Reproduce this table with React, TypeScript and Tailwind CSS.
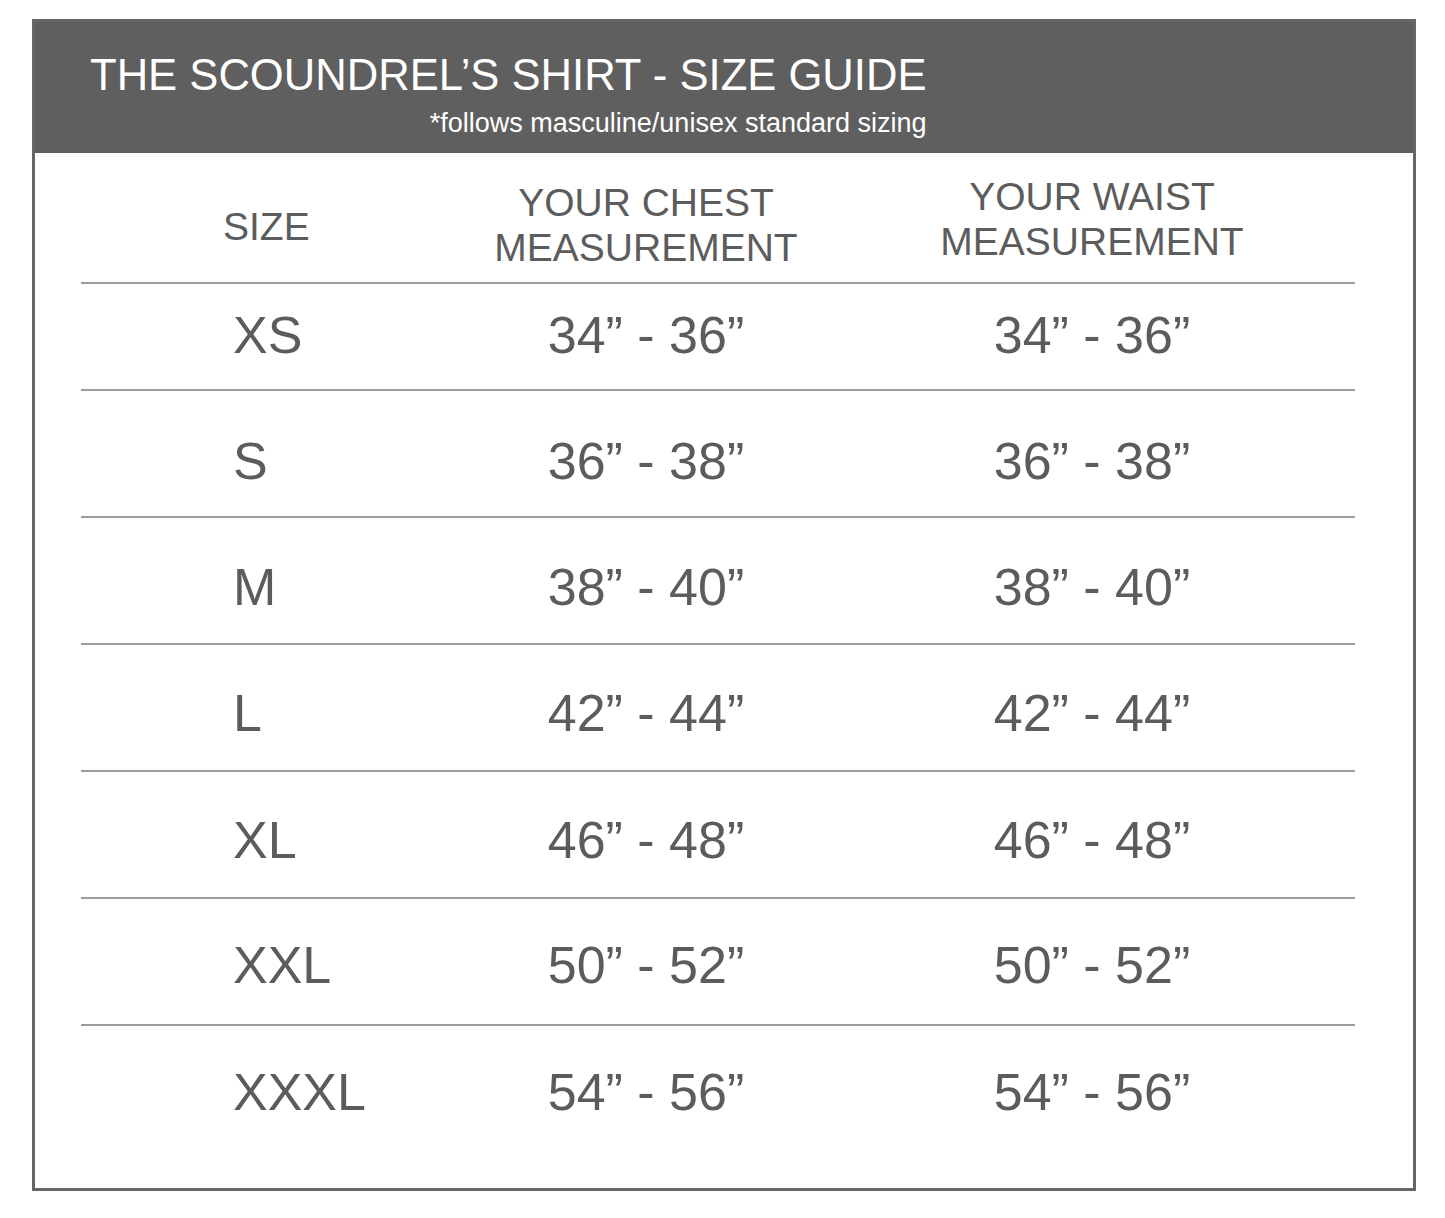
import React from "react";

const rows = [
  { size: "XS", chest: "34\u201D - 36\u201D", waist: "34\u201D - 36\u201D", h: "h-[105px]", pt: "pt-[25px]" },
  { size: "S", chest: "36\u201D - 38\u201D", waist: "36\u201D - 38\u201D", h: "h-[125px]", pt: "pt-[44px]" },
  { size: "M", chest: "38\u201D - 40\u201D", waist: "38\u201D - 40\u201D", h: "h-[125px]", pt: "pt-[43px]" },
  { size: "L", chest: "42\u201D - 44\u201D", waist: "42\u201D - 44\u201D", h: "h-[125px]", pt: "pt-[42px]" },
  { size: "XL", chest: "46\u201D - 48\u201D", waist: "46\u201D - 48\u201D", h: "h-[125px]", pt: "pt-[42px]" },
  { size: "XXL", chest: "50\u201D - 52\u201D", waist: "50\u201D - 52\u201D", h: "h-[125px]", pt: "pt-[40px]" },
  { size: "XXXL", chest: "54\u201D - 56\u201D", waist: "54\u201D - 56\u201D", h: "h-[125px]", pt: "pt-[40px]" },
];

export default function App() {
  return (
    <div
      className="w-[1445px] h-[1218px] bg-white pt-[19px] pl-[32px]"
      style={{ fontFamily: '"Liberation Sans", Arial, Helvetica, sans-serif' }}
    >
      <div className="w-[1384px] h-[1172px] border-[3px] border-[#666666] bg-white flex flex-col">
        {/* Header band */}
        <div className="h-[131px] bg-[#5f5f5f] pl-[55px] pt-[31px]">
          <div className="inline-flex flex-col items-end">
            <h1 className="text-white text-[43.6px] leading-[44px] font-normal whitespace-nowrap">
              THE SCOUNDREL{"\u2019"}S SHIRT - SIZE GUIDE
            </h1>
            <p className="text-white text-[27px] leading-[26px] mt-[13px] whitespace-nowrap">
              *follows masculine/unisex standard sizing
            </p>
          </div>
        </div>

        {/* Table */}
        <div className="ml-[46px] w-[1274px] text-[#5c5c5c]">
          <div className="grid grid-cols-[339px_452px_440px_1fr] h-[129px]">
            <div className="pl-[142px] pt-[51px] text-[39px] leading-[45px]">SIZE</div>
            <div className="pt-[27px] text-[39px] leading-[45px] text-center">
              YOUR CHEST
              <br />
              MEASUREMENT
            </div>
            <div className="pt-[21px] text-[39px] leading-[45px] text-center">
              YOUR WAIST
              <br />
              MEASUREMENT
            </div>
            <div />
          </div>
          {rows.map((r) => (
            <div key={r.size}>
              <div className="h-[2px] bg-[#9c9c9c]" />
              <div className={`grid grid-cols-[339px_452px_440px_1fr] ${r.h}`}>
                <div className={`pl-[152px] ${r.pt} text-[52px] leading-[52px]`}>{r.size}</div>
                <div className={`${r.pt} text-[52px] leading-[52px] text-center`}>{r.chest}</div>
                <div className={`${r.pt} text-[52px] leading-[52px] text-center`}>{r.waist}</div>
                <div />
              </div>
            </div>
          ))}
        </div>
      </div>
    </div>
  );
}
